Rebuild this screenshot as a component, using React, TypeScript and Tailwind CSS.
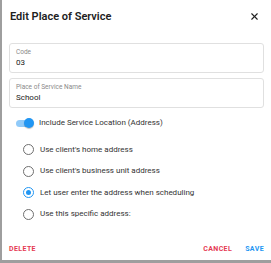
import { X } from "lucide-react";

const options = [
  { label: "Use client's home address", checked: false },
  { label: "Use client's business unit address", checked: false },
  { label: "Let user enter the address when scheduling", checked: true },
  { label: "Use this specific address:", checked: false },
];

function Field({ label, value }: { label: string; value: string }) {
  return (
    <div className="flex h-[30px] flex-col justify-center rounded-[3px] border border-[#e0e0e0] px-[6px]">
      <span className="text-[6.5px] leading-[9px] text-[#8a8a8a]">{label}</span>
      <span className="text-[8px] leading-[11px] text-[#212121]">{value}</span>
    </div>
  );
}

function Radio({ checked }: { checked: boolean }) {
  return (
    <span
      className={`flex h-[11px] w-[11px] items-center justify-center rounded-full border-[1.3px] ${
        checked ? "border-[#2196f3]" : "border-[#6f6f6f]"
      }`}
    >
      {checked && <span className="h-[5px] w-[5px] rounded-full bg-[#2196f3]" />}
    </span>
  );
}

export default function App() {
  return (
    <div
      className="flex h-[263px] w-[271px] bg-[#9e9e9e]"
      style={{ fontFamily: "Roboto, 'Liberation Sans', sans-serif" }}
    >
      <div className="ml-[2px] flex h-[260px] w-[269px] flex-col bg-white px-[7px]">
        <div className="mt-[9px] flex h-[15px] items-center justify-between">
          <h2 className="pl-[1px] text-[11px] font-semibold leading-[15px] text-[#212121]">
            Edit Place of Service
          </h2>
          <X size={11} strokeWidth={2.4} className="mr-[4px] text-[#212121]" />
        </div>

        <div className="mt-[19px] flex flex-col gap-[5px]">
          <Field label="Code" value="03" />
          <Field label="Place of Service Name" value="School" />
        </div>

        <div className="mt-[9px] flex h-[12px] items-center gap-[6px] pl-[7px]">
          <span className="relative flex h-[7px] w-[17px] items-center rounded-full bg-[#90caf9]">
            <span className="absolute right-[-1px] h-[10px] w-[10px] rounded-full bg-[#2196f3] shadow-[0_1px_1px_rgba(0,0,0,0.25)]" />
          </span>
          <span className="text-[8px] text-[#333]">Include Service Location (Address)</span>
        </div>

        <div className="mt-[15px] flex flex-col gap-[10.5px] pl-[14px]">
          {options.map((o) => (
            <div key={o.label} className="flex h-[11px] items-center gap-[6px]">
              <Radio checked={o.checked} />
              <span className="text-[8px] text-[#333]">{o.label}</span>
            </div>
          ))}
        </div>

        <div className="mt-auto mb-[6px] flex items-center justify-between">
          <button className="text-[7px] font-bold tracking-[0.4px] text-[#e53952]">DELETE</button>
          <div className="flex items-center gap-[13px]">
            <button className="text-[7px] font-bold tracking-[0.4px] text-[#e53952]">CANCEL</button>
            <button className="text-[7px] font-bold tracking-[0.4px] text-[#2196f3]">SAVE</button>
          </div>
        </div>
      </div>
    </div>
  );
}
